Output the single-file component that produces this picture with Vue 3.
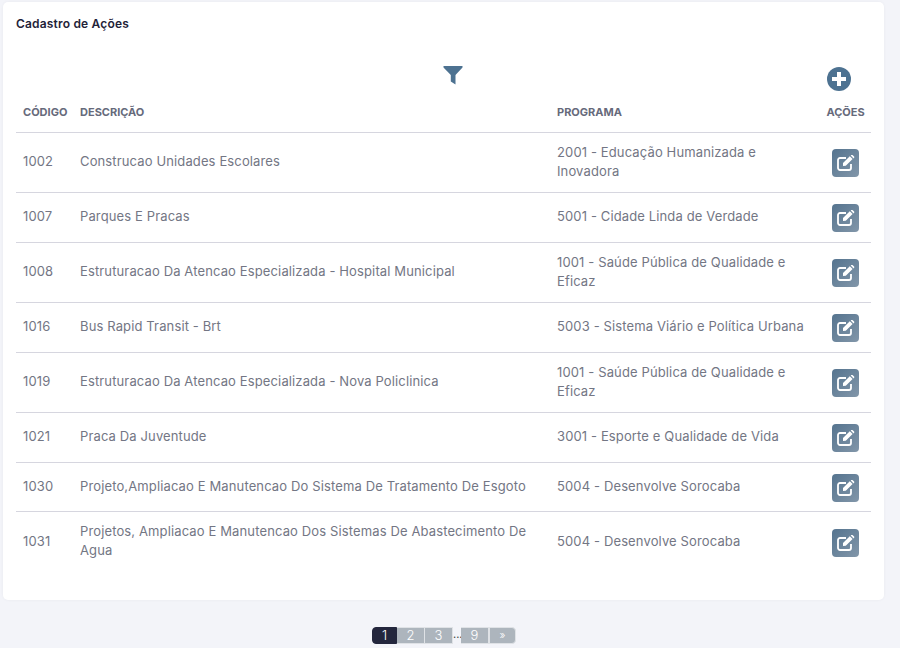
<script setup>
const rows = [
  { code: '1002', desc: 'Construcao Unidades Escolares', prog: '2001 - Educação Humanizada e Inovadora', wrap: true },
  { code: '1007', desc: 'Parques E Pracas', prog: '5001 - Cidade Linda de Verdade' },
  { code: '1008', desc: 'Estruturacao Da Atencao Especializada - Hospital Municipal', prog: '1001 - Saúde Pública de Qualidade e Eficaz', wrap: true },
  { code: '1016', desc: 'Bus Rapid Transit - Brt', prog: '5003 - Sistema Viário e Política Urbana' },
  { code: '1019', desc: 'Estruturacao Da Atencao Especializada - Nova Policlinica', prog: '1001 - Saúde Pública de Qualidade e Eficaz', wrap: true },
  { code: '1021', desc: 'Praca Da Juventude', prog: '3001 - Esporte e Qualidade de Vida' },
  { code: '1030', desc: 'Projeto,Ampliacao E Manutencao Do Sistema De Tratamento De Esgoto', prog: '5004 - Desenvolve Sorocaba' },
  { code: '1031', desc: 'Projetos, Ampliacao E Manutencao Dos Sistemas De Abastecimento De Agua', prog: '5004 - Desenvolve Sorocaba' },
]
</script>

<template>
  <div class="page">
    <section class="card">
      <h1 class="title">Cadastro de Ações</h1>
      <div class="tools">
        <svg class="filter" viewBox="0 0 20 20" width="20" height="20">
          <path d="M0.500 1h19v1.600L12.500 10v9.500L7.800 16.500V10L0.500 2.600z" />
        </svg>
        <svg class="plus" viewBox="0 0 24 24" width="24" height="24">
          <circle cx="12" cy="12" r="12" />
          <path d="M10 5h4v5h5v4h-5v5h-4v-5H5v-4h5z" fill="#fff" />
        </svg>
      </div>
      <div class="row head">
        <div class="c1">CÓDIGO</div>
        <div class="c2">DESCRIÇÃO</div>
        <div class="c3">PROGRAMA</div>
        <div class="c4">AÇÕES</div>
      </div>
      <div v-for="r in rows" :key="r.code" class="row body">
        <div class="c1">{{ r.code }}</div>
        <div class="c2">{{ r.desc }}</div>
        <div class="c3" :class="{ wrapped: r.wrap }">{{ r.prog }}</div>
        <div class="c4">
          <button class="edit" type="button" aria-label="Editar">
            <svg viewBox="0 0 18 16" width="18" height="16">
              <path d="M14 9v4a2 2 0 0 1-2 2H3a2 2 0 0 1-2-2V5a2 2 0 0 1 2-2h6" fill="none" stroke="#fff" stroke-width="1.800" />
              <path d="M6 8l6.800-6.800 2.800 2.800L8.800 10.800 6 11zM13.700.4l.6-.4a1 1 0 0 1 1.200 0l1.600 1.600a1 1 0 0 1 0 1.200l-.5.6z" fill="#fff" />
            </svg>
          </button>
        </div>
      </div>
    </section>
    <nav class="pager">
      <span class="pg active">1</span>
      <span class="pg">2</span>
      <span class="pg">3</span>
      <span class="dots">...</span>
      <span class="pg">9</span>
      <span class="pg last">»</span>
    </nav>
  </div>
</template>

<style scoped>
.page {
  height: 648px;
  box-sizing: border-box;
  padding: 2px 16px 0 3px;
  background: #f3f4f9;
  font-family: Inter, "Open Sans", "Liberation Sans", sans-serif;
  overflow: hidden;
}
.card {
  height: 598px;
  box-sizing: border-box;
  padding: 13px 13px 0;
  background: #fff;
  border-radius: 5px;
  box-shadow: 0 0 3px rgba(60, 60, 90, 0.06);
}
.title {
  margin: 0;
  font-size: 12px;
  line-height: 18px;
  font-weight: 600;
  letter-spacing: 0.18px;
  color: #1f2338;
}
.tools {
  height: 52px;
  margin-top: 13px;
  display: flex;
  align-items: flex-start;
}
.filter { margin: 19px 0 0 427px; fill: #4d7291; }
.plus { margin: 21px 0 0 364px; fill: #4d7291; }
.row {
  display: grid;
  grid-template-columns: 57px 477px 270px 51px;
  border-bottom: 1px solid #d6d6df;
  align-items: center;
}
.row > div { padding: 0 7px; }
.head {
  height: 35px;
  padding-bottom: 7px;
  box-sizing: border-box;
  font-size: 11px;
  font-weight: 700;
  color: #666a7b;
}
.head .c4 { padding: 0; text-align: center; }
.body {
  padding: 9px 0 10px;
  font-size: 13px;
  line-height: 19px;
  letter-spacing: 0.13px;
  color: #737684;
}
.body > .c1, .body > .c2, .body > .c3 { padding-bottom: 2px; }
.body > .wrapped { padding-top: 1px; padding-bottom: 1px; }
.body:nth-last-child(2) { padding-bottom: 9px; }
.body:last-child { padding-top: 10px; border-bottom: 0; }
.body .c4 { padding: 0; display: flex; justify-content: center; }
.edit {
  width: 27px;
  height: 28px;
  margin-top: 2px;
  padding: 0;
  border: 0;
  border-radius: 4px;
  background: linear-gradient(135deg, #55748f, #8296a9);
  display: flex;
  align-items: center;
  justify-content: center;
}
.pager {
  display: flex;
  align-items: stretch;
  margin: 27px 0 0 369px;
  height: 17px;
  font-size: 13px;
  font-weight: 300;
  line-height: 15px;
  color: #fff;
}
.pg {
  width: 28px;
  box-sizing: border-box;
  border: 1px solid #dfe2e6;
  border-left-width: 0;
  background: #adb5bd;
  text-align: center;
}
.active {
  width: 25px;
  background: #23263d;
  border: 1px solid #23263d;
  border-radius: 4px 0 0 4px;
}
.last {
  width: 27px;
  border-left-width: 1px;
  border-radius: 0 4px 4px 0;
  font-size: 11px;
}
.dots { width: 8px; color: #444; font-size: 11px; font-weight: 400; text-align: center; }
</style>
